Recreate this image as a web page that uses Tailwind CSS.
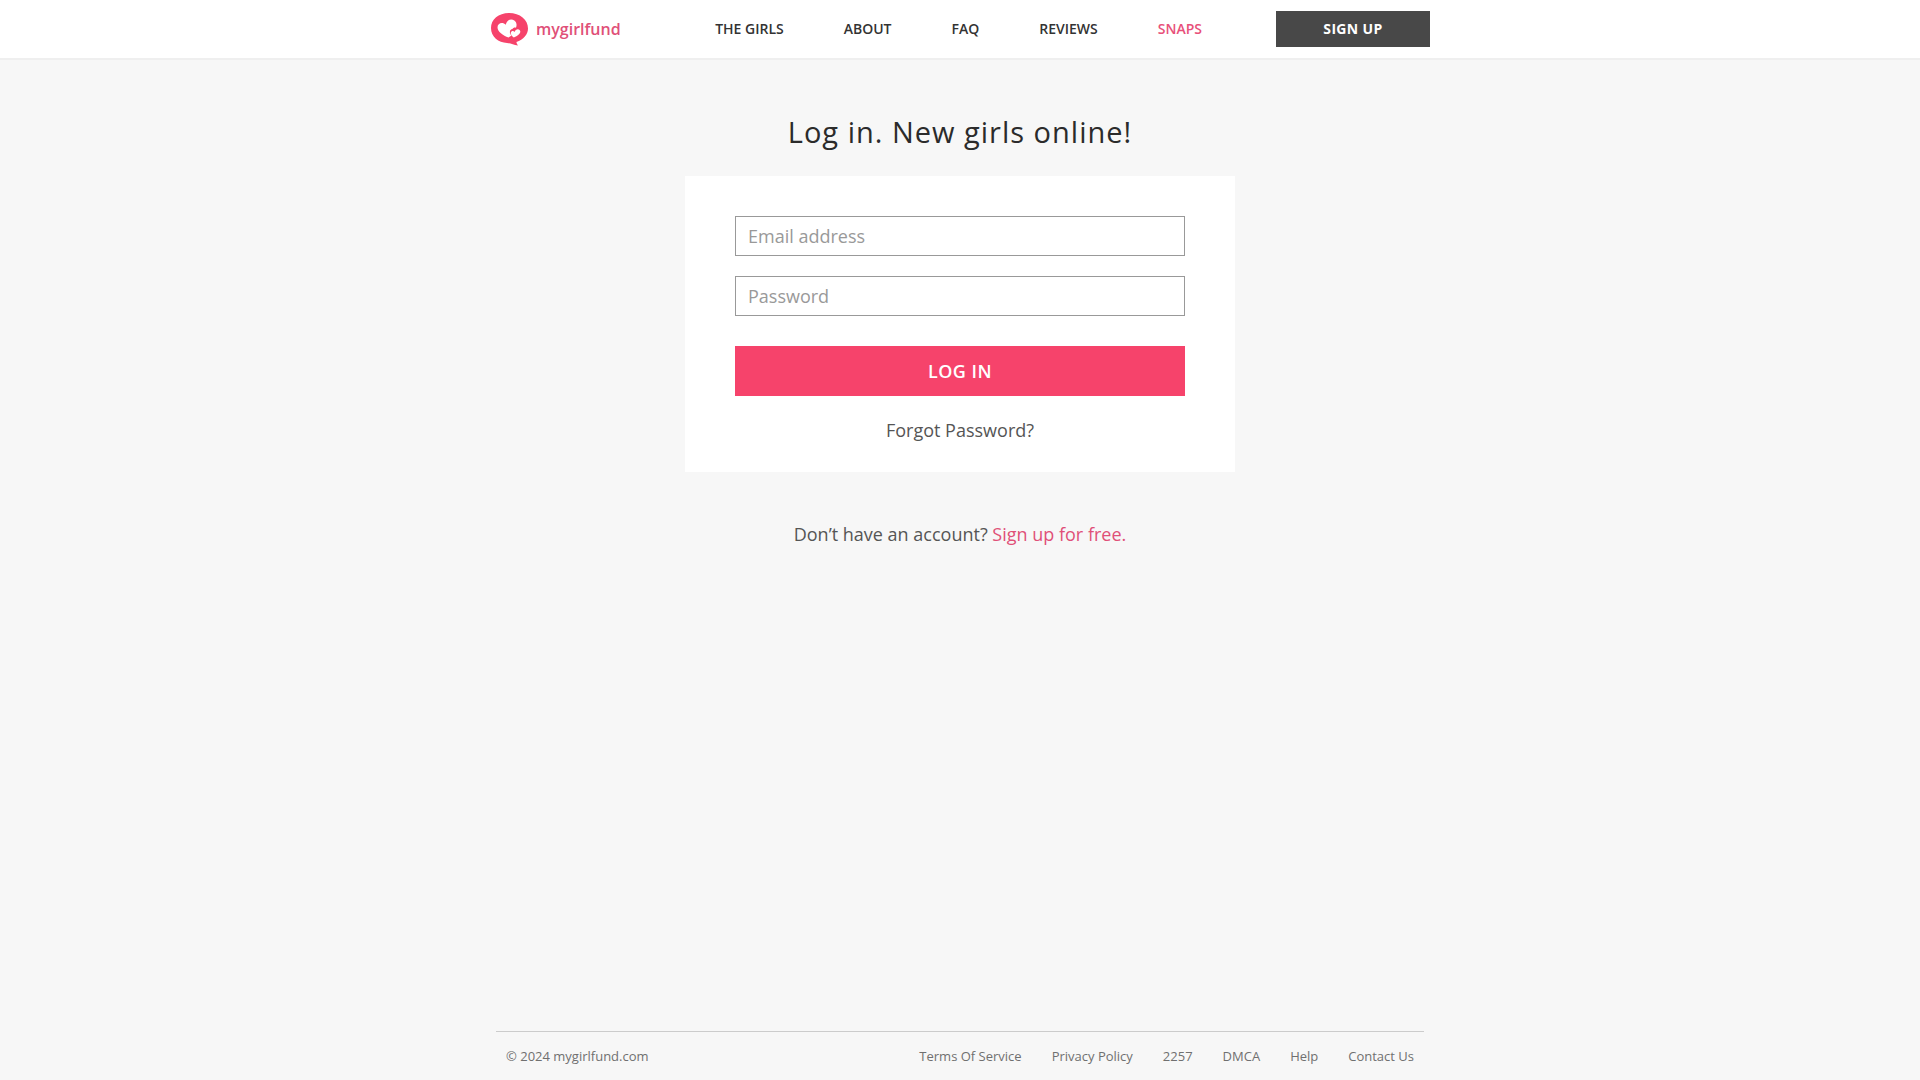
<!DOCTYPE html>
<html lang="en">
<head>
<meta charset="utf-8">
<meta name="viewport" content="width=device-width, initial-scale=1">
<title>Log in - mygirlfund</title>
<script src="https://cdn.jsdelivr.net/npm/@tailwindcss/browser@4"></script>
</head>
<body class="flex min-h-screen flex-col bg-[#f7f7f7] font-['Open_Sans',sans-serif] text-lg text-[#555]">
<header class="border-b-2 border-[#efefef] bg-white">
  <div class="mx-auto flex h-[58px] max-w-[940px] items-center justify-between">
    <a href="#" class="flex items-center gap-2 text-base font-semibold text-[#e05078]">
      <svg class="h-9 w-[38px]" viewBox="0 0 38 36" aria-hidden="true">
        <path fill="#f6436b" d="M19 2C8.500 2 1 8.500 1 17c0 9 7.500 14.500 16 15 4 .3 6.500 2 11 2.500-1-1.200-1.500-2.300-1.600-3.500C33.500 28.500 38 23.500 38 17.500 38 8.500 30 2 19 2z"/>
        <path fill="#fff" d="M18.500 26.500C13 24.500 7.500 21 7.500 16.300c0-4.300 5.200-5.800 8.300-2.500C16.500 9 21 7.200 24.300 9.500c2.700 2 2.600 4.700 1.700 7.200-1.600-.5-2.800.1-3.500 1.300-1.900.2-3 1.900-2.500 3.900.3 1 .8 1.900 1.500 2.700z"/>
        <path fill="#fff" d="M23.800 26.500c-1.800-1.200-3.300-2.900-3-4.700.4-2 2.700-2.200 3.800-.7.900-2.800 3.400-3.500 5-2.100 2.400 2.500-1.500 5.800-5.800 7.500z"/>
      </svg>
      <span>mygirlfund</span>
    </a>
    <div class="flex items-center gap-[74px]">
      <nav class="flex gap-[60px] text-sm font-semibold text-[#333]">
        <a href="#">THE GIRLS</a>
        <a href="#">ABOUT</a>
        <a href="#">FAQ</a>
        <a href="#">REVIEWS</a>
        <a href="#" class="text-[#e8507a]">SNAPS</a>
      </nav>
      <button type="button" class="h-9 w-[154px] bg-[#484848] text-sm font-bold tracking-wide text-white">SIGN UP</button>
    </div>
  </div>
</header>

<main class="mx-auto flex w-full max-w-[550px] grow flex-col items-center pt-12">
  <h1 class="text-[29px] leading-12 tracking-[1px] text-[#2b2b2b]">Log in. New girls online!</h1>
  <form class="mt-5 flex w-full flex-col bg-white px-[50px] pt-10 pb-7">
    <input type="email" aria-label="Email address" placeholder="Email address" class="h-10 border border-[#999] px-3 placeholder:text-[#999]">
    <input type="password" aria-label="Password" placeholder="Password" class="mt-5 h-10 border border-[#999] px-3 placeholder:text-[#999]">
    <button type="submit" class="mt-[30px] h-[50px] bg-[#f6436b] font-semibold tracking-wide text-white">LOG IN</button>
    <a href="#" class="mt-5 self-center">Forgot Password?</a>
  </form>
  <p class="mt-12">Don’t have an account? <a href="#" class="text-[#e05078]">Sign up for free.</a></p>
</main>

<footer class="mx-auto flex h-[49px] w-full max-w-[928px] items-center justify-between border-t border-[#ccc] px-[10px] text-[13px] text-[#707070]">
  <span>© 2024 mygirlfund.com</span>
  <nav class="flex gap-[30px]">
    <a href="#">Terms Of Service</a>
    <a href="#">Privacy Policy</a>
    <a href="#">2257</a>
    <a href="#">DMCA</a>
    <a href="#">Help</a>
    <a href="#">Contact Us</a>
  </nav>
</footer>
</body>
</html>
